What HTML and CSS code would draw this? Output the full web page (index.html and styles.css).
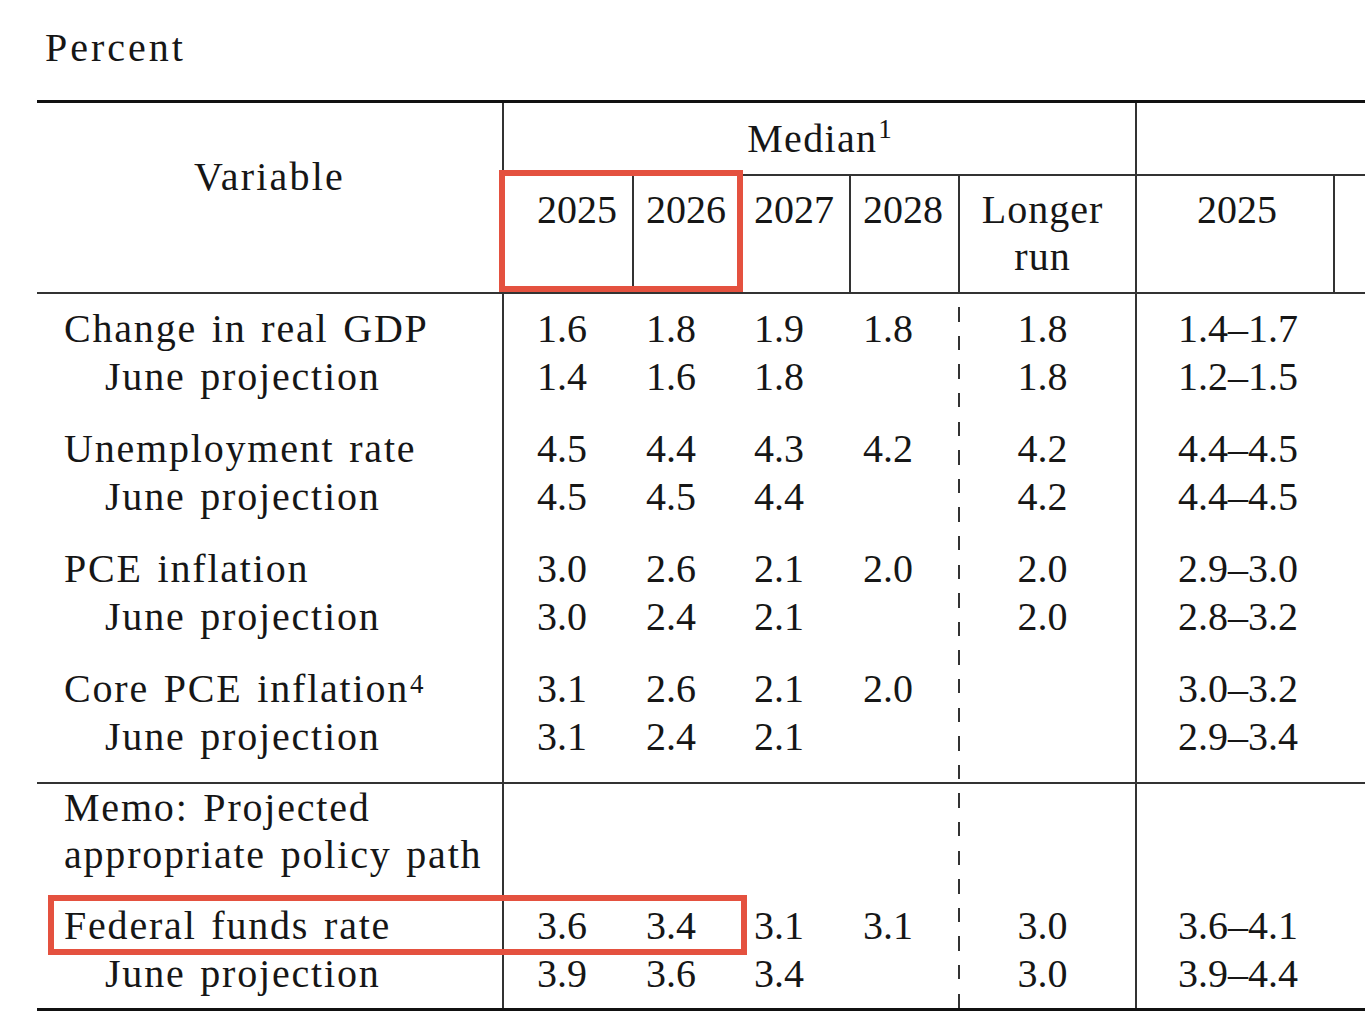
FILE: index.html
```html
<!DOCTYPE html>
<html lang="en">
<head>
<meta charset="utf-8">
<title>Economic projections</title>
<link rel="stylesheet" href="styles.css">
</head>
<body>
<div class="page">
  <div class="caption">Percent</div>
  <table class="proj">
    <colgroup>
      <col class="w-var">
      <col class="w-y1">
      <col class="w-y2">
      <col class="w-y">
      <col class="w-y">
      <col class="w-lr">
      <col class="w-ct">
      <col class="w-ct">
    </colgroup>
    <thead>
      <tr class="hrow1">
        <th rowspan="2" class="var-head">Variable</th>
        <th colspan="5" class="median">Median<sup class="sup-med">1</sup></th>
        <th colspan="2" class="ct-head">&nbsp;</th>
      </tr>
      <tr class="hrow2">
        <th class="c2">2025</th>
        <th class="cy">2026</th>
        <th class="cy">2027</th>
        <th class="cy">2028</th>
        <th class="c6">Longer<br>run</th>
        <th class="c7">2025</th>
        <th class="c8">&nbsp;</th>
      </tr>
    </thead>
    <tbody>
      <tr class="row-first">
        <td class="lbl">Change in real GDP</td>
        <td class="c2">1.6</td><td class="cy">1.8</td><td class="cy">1.9</td><td class="cy">1.8</td>
        <td class="c6">1.8</td><td class="c7">1.4–1.7</td><td class="c8"></td>
      </tr>
      <tr>
        <td class="lbl sub">June projection</td>
        <td class="c2">1.4</td><td class="cy">1.6</td><td class="cy">1.8</td><td class="cy"></td>
        <td class="c6">1.8</td><td class="c7">1.2–1.5</td><td class="c8"></td>
      </tr>
      <tr class="row-group">
        <td class="lbl">Unemployment rate</td>
        <td class="c2">4.5</td><td class="cy">4.4</td><td class="cy">4.3</td><td class="cy">4.2</td>
        <td class="c6">4.2</td><td class="c7">4.4–4.5</td><td class="c8"></td>
      </tr>
      <tr>
        <td class="lbl sub">June projection</td>
        <td class="c2">4.5</td><td class="cy">4.5</td><td class="cy">4.4</td><td class="cy"></td>
        <td class="c6">4.2</td><td class="c7">4.4–4.5</td><td class="c8"></td>
      </tr>
      <tr class="row-group">
        <td class="lbl">PCE inflation</td>
        <td class="c2">3.0</td><td class="cy">2.6</td><td class="cy">2.1</td><td class="cy">2.0</td>
        <td class="c6">2.0</td><td class="c7">2.9–3.0</td><td class="c8"></td>
      </tr>
      <tr>
        <td class="lbl sub">June projection</td>
        <td class="c2">3.0</td><td class="cy">2.4</td><td class="cy">2.1</td><td class="cy"></td>
        <td class="c6">2.0</td><td class="c7">2.8–3.2</td><td class="c8"></td>
      </tr>
      <tr class="row-group">
        <td class="lbl">Core PCE inflation<sup class="sup-core">4</sup></td>
        <td class="c2">3.1</td><td class="cy">2.6</td><td class="cy">2.1</td><td class="cy">2.0</td>
        <td class="c6"></td><td class="c7">3.0–3.2</td><td class="c8"></td>
      </tr>
      <tr class="row-last">
        <td class="lbl sub">June projection</td>
        <td class="c2">3.1</td><td class="cy">2.4</td><td class="cy">2.1</td><td class="cy"></td>
        <td class="c6"></td><td class="c7">2.9–3.4</td><td class="c8"></td>
      </tr>
      <tr class="row-memo">
        <td class="lbl">Memo: Projected<br>appropriate policy path</td>
        <td class="c2"></td><td class="cy"></td><td class="cy"></td><td class="cy"></td>
        <td class="c6"></td><td class="c7"></td><td class="c8"></td>
      </tr>
      <tr class="row-group">
        <td class="lbl">Federal funds rate</td>
        <td class="c2">3.6</td><td class="cy">3.4</td><td class="cy">3.1</td><td class="cy">3.1</td>
        <td class="c6">3.0</td><td class="c7">3.6–4.1</td><td class="c8"></td>
      </tr>
      <tr class="row-end">
        <td class="lbl sub">June projection</td>
        <td class="c2">3.9</td><td class="cy">3.6</td><td class="cy">3.4</td><td class="cy"></td>
        <td class="c6">3.0</td><td class="c7">3.9–4.4</td><td class="c8"></td>
      </tr>
    </tbody>
  </table>
  <div class="mark mark-years"></div>
  <div class="mark mark-ffr"></div>
</div>
</body>
</html>
```
FILE: styles.css
```css
html, body {
  margin: 0;
  padding: 0;
  background: #ffffff;
  overflow: hidden;
}

.page {
  position: relative;
  width: 1365px;
  height: 1021px;
  overflow: hidden;
  padding-left: 37px;
  box-sizing: border-box;
  font-family: "Liberation Serif", "Times New Roman", serif;
  font-size: 40px;
  color: #161616;
}

.caption {
  margin: 24px 0 28px 8px;
  line-height: 48px;
  letter-spacing: 3px;
}

.proj {
  table-layout: fixed;
  width: 1494px;
  border-collapse: separate;
  border-spacing: 0;
  border-top: 3px solid #111;
  border-bottom: 3px solid #111;
  background-image: repeating-linear-gradient(to bottom, transparent 0 14.3px, #333 14.3px 28.6px);
  background-repeat: no-repeat;
  background-size: 2px 715px;
  background-position: 921px 190px;
}

.w-var { width: 465px; }
.w-y1 { width: 130px; }
.w-y2 { width: 108px; }
.w-y { width: 109px; }
.w-lr { width: 177px; }
.w-ct { width: 198px; }

.proj th,
.proj td {
  font-weight: normal;
  padding: 0;
  line-height: 48px;
  text-align: left;
  vertical-align: top;
  white-space: nowrap;
  border: 0;
}

/* header row 1 */
.var-head {
  text-align: center !important;
  padding-top: 50px !important;
  letter-spacing: 2.2px;
  border-bottom: 2px solid #333 !important;
}

.hrow1 .median,
.hrow1 .ct-head {
  padding: 12px 0 11px;
  border-left: 2px solid #333;
  border-bottom: 2px solid #333;
}

.median {
  text-align: center !important;
  letter-spacing: 1.3px;
}

.sup-med {
  font-size: 27px;
  line-height: 0;
  vertical-align: 14px;
  letter-spacing: 0;
  margin-left: 1px;
}

.sup-core {
  font-size: 27px;
  line-height: 0;
  vertical-align: 9px;
  letter-spacing: 0;
  margin-left: 1px;
}

/* columns (body) */
.proj .c2 {
  padding-left: 33px;
  border-left: 2px solid #333;
}

.proj .cy {
  padding-left: 14px;
}

.proj .c6 {
  text-align: center;
  padding-right: 8px;
}

.proj .c7 {
  text-align: center;
  padding-left: 6px;
  border-left: 2px solid #333;
}

/* header row 2 */
.proj .hrow2 th {
  padding-top: 10px;
  padding-bottom: 12px;
  line-height: 47px;
  height: 94px;
  border-left: 2px solid #333;
  border-bottom: 2px solid #333;
}

.proj .hrow2 .cy {
  padding-left: 12px;
}

.proj .hrow2 .c6 {
  letter-spacing: 1px;
  padding-right: 10px;
}

.proj .hrow2 .c7 {
  padding-left: 4px;
}

.proj .lbl {
  padding-left: 27px;
  letter-spacing: 1.8px;
  word-spacing: 3px;
}

.proj .lbl.sub {
  padding-left: 68px;
}

/* body rows */
.proj .row-first td { padding-top: 11px; }
.proj .row-group td { padding-top: 24px; }
.proj .row-last td { padding-bottom: 21px; }

.proj .row-memo td {
  line-height: 47px;
  border-top: 2px solid #333;
}

.proj .row-end td { padding-bottom: 10px; }

/* highlight annotations */
.mark {
  position: absolute;
  border: 6px solid #e4513f;
  box-sizing: border-box;
}

.mark-years {
  left: 499px;
  top: 170px;
  width: 244px;
  height: 122px;
}

.mark-ffr {
  left: 48px;
  top: 895px;
  width: 699px;
  height: 60px;
}
```
